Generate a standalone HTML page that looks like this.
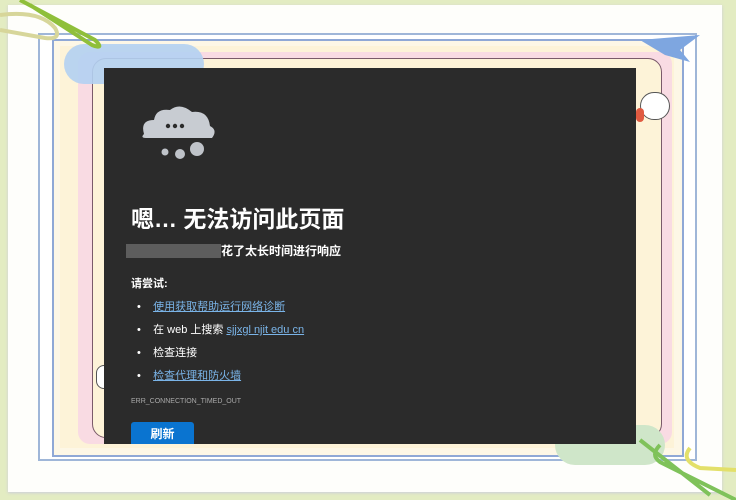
<!DOCTYPE html>
<html><head><meta charset="utf-8"><style>
body{margin:0;width:736px;height:500px;background:#e3ecc2;position:relative;overflow:hidden;font-family:"Liberation Sans","Noto Sans CJK SC",sans-serif}
.a{position:absolute;box-sizing:border-box}
</style></head><body>
<div class="a" style="left:8px;top:5px;width:714px;height:487px;background:#fefefb;box-shadow:0 1px 3px #ccd"></div>
<div class="a" style="left:38px;top:33px;width:659px;height:428px;border:2px solid #9fb6d8;background:#fff"></div>
<div class="a" style="left:52px;top:39px;width:632px;height:418px;border:2px solid #8fa8d6;background:#fdf7e6"></div>
<div class="a" style="left:60px;top:46px;width:614px;height:402px;background:#fdf3d8"></div>
<div class="a" style="left:78px;top:52px;width:594px;height:392px;background:#f9dbe3;border-radius:12px"></div>
<div class="a" style="left:92px;top:58px;width:570px;height:380px;border:1px solid #7a5a6a;border-radius:14px;background:#fdf3d8"></div>
<div class="a" style="left:64px;top:44px;width:140px;height:40px;background:#b3d0f2;border-radius:20px;opacity:.9"></div>
<div class="a" style="left:555px;top:425px;width:110px;height:40px;background:#cfe6c9;border-radius:20px"></div>
<div class="a" style="left:640px;top:92px;width:30px;height:28px;background:#fff;border:1px solid #555;border-radius:14px"></div>
<div class="a" style="left:636px;top:108px;width:8px;height:14px;background:#e05a40;border-radius:4px"></div>
<div class="a" style="left:96px;top:365px;width:18px;height:24px;background:#fff;border:1px solid #555;border-radius:8px"></div>
<svg class="a" style="left:0;top:0" width="736" height="500">
<path d="M20 0 L95 40 Q105 50 92 45 L30 5" fill="none" stroke="#8fbf3a" stroke-width="4"/>
<path d="M0 15 Q40 10 55 28 Q62 40 45 38 L0 30" fill="none" stroke="#d7d69a" stroke-width="4"/>
<path d="M640 40 L700 35 L680 50 L690 62 L665 55" fill="#7ea6e0"/>
<path d="M640 440 L710 495 M660 445 Q650 455 660 462 L736 500" fill="none" stroke="#7fc25a" stroke-width="4"/>
<path d="M690 448 Q680 460 700 468 L736 470" fill="none" stroke="#e3e06a" stroke-width="4"/>
</svg>
<div class="a" style="left:104px;top:68px;width:532px;height:376px;background:#2b2b2b;color:#fff">
<svg class="a" style="left:34px;top:36px" width="80" height="62">
<path d="M6 30 Q2 16 16 16 Q18 4 32 6 Q42 -2 54 8 Q70 6 72 22 Q80 26 74 34 L8 34 Q2 34 6 30Z" fill="#c8ccd2"/>
<circle cx="30" cy="22" r="2.2" fill="#2b2b2b"/><circle cx="37" cy="22" r="2.2" fill="#2b2b2b"/><circle cx="44" cy="22" r="2.2" fill="#2b2b2b"/>
<circle cx="59" cy="45" r="7" fill="#bfc3c9"/><circle cx="42" cy="50" r="5" fill="#bfc3c9"/><circle cx="27" cy="48" r="3.5" fill="#bfc3c9"/>
</svg>
<div class="a" style="left:27px;top:132px;font-size:23px;font-weight:bold;white-space:nowrap">嗯… 无法访问此页面</div>
<div class="a" style="left:22px;top:176px;width:95px;height:14px;background:#6a6a6a;opacity:.8"></div>
<div class="a" style="left:117px;top:174px;font-size:12px;font-weight:bold">花了太长时间进行响应</div>
<div class="a" style="left:27px;top:207px;font-size:11px;font-weight:bold">请尝试:</div>
<div class="a" style="left:33px;top:228px;font-size:11px;line-height:23px;color:#fff">
<div>•&nbsp;&nbsp;&nbsp;&nbsp;<span style="color:#7ab4e8;text-decoration:underline">使用获取帮助运行网络诊断</span></div>
<div>•&nbsp;&nbsp;&nbsp;&nbsp;在 web 上搜索 <span style="color:#7ab4e8;text-decoration:underline">sjjxgl njit edu cn</span></div>
<div>•&nbsp;&nbsp;&nbsp;&nbsp;检查连接</div>
<div>•&nbsp;&nbsp;&nbsp;&nbsp;<span style="color:#7ab4e8;text-decoration:underline">检查代理和防火墙</span></div>
</div>
<div class="a" style="left:27px;top:330px;font-size:7px;color:#aaa">ERR_CONNECTION_TIMED_OUT</div>
<div class="a" style="left:27px;top:354px;width:63px;height:22px;background:#0a74d0;border-radius:3px 3px 0 0;font-size:12px;font-weight:bold;text-align:center;line-height:24px">刷新</div>
</div>
</body></html>
